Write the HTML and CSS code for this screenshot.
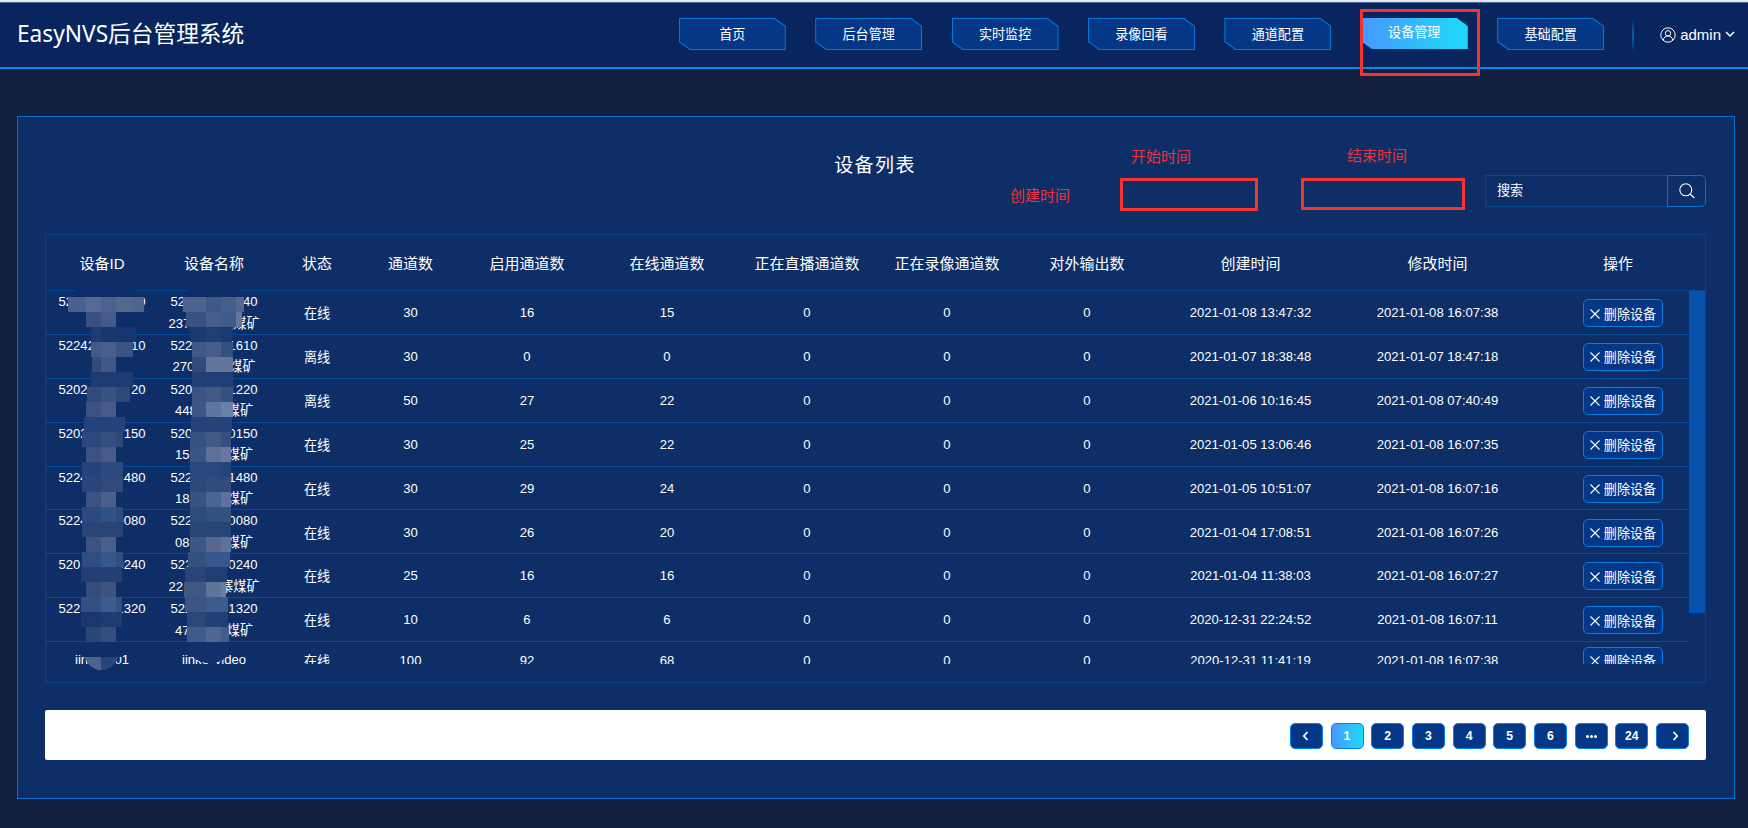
FILE: index.html
```html
<!DOCTYPE html>
<html lang="zh-CN">
<head>
  <meta charset="UTF-8">
  <title>EasyNVS后台管理系统</title>
  <link rel="stylesheet" href="styles.css">
</head>
<body>
  <header class="header">
    <h1 class="logo">EasyNVS后台管理系统</h1>
    <nav class="nav">
      <a class="nav-item">首页</a>
      <a class="nav-item">后台管理</a>
      <a class="nav-item">实时监控</a>
      <a class="nav-item">录像回看</a>
      <a class="nav-item">通道配置</a>
      <a class="nav-item active">设备管理</a>
      <a class="nav-item">基础配置</a>
    </nav>
    <span class="divider"></span>
    <div class="user">
      <svg class="user-icon" viewBox="0 0 16 16" fill="none" stroke="#fff">
        <circle cx="8" cy="8" r="7.2"/>
        <circle cx="8" cy="6.3" r="2.7"/>
        <path d="M3.3 13.2c.3-2.800 2.200-4.200 4.700-4.200s4.400 1.400 4.700 4.200"/>
      </svg>
      <span>admin</span>
      <svg class="user-arrow" viewBox="0 0 10 8" fill="none" stroke="#fff" stroke-width="1.5"><path d="M1 2l4 4 4-4"/></svg>
    </div>
  </header>

  <main class="card">
    <div class="toolbar">
      <h2>设备列表</h2>
      <div class="search">
        <span class="search-input">搜索</span>
        <button class="search-btn">
          <svg viewBox="0 0 16 16" fill="none" stroke="#fff" stroke-width="1.1"><circle cx="6.8" cy="6.8" r="6"/><path d="M11 11l4.4 4"/></svg>
        </button>
      </div>
    </div>

    <div class="table">
      <div class="row head">
        <span>设备ID</span><span>设备名称</span><span>状态</span><span>通道数</span><span>启用通道数</span><span>在线通道数</span><span>正在直播通道数</span><span>正在录像通道数</span><span>对外输出数</span><span>创建时间</span><span>修改时间</span><span>操作</span>
      </div>
      <div class="scroll">
        <div class="rows" id="rows"></div>
        <div class="scrollbar"></div>
      </div>
    </div>

    <div class="pagination">
      <button><svg viewBox="0 0 10 10"><path d="M6.5 1L2.8 5l3.7 4"/></svg></button>
      <button class="current">1</button>
      <button>2</button>
      <button>3</button>
      <button>4</button>
      <button>5</button>
      <button>6</button>
      <button class="more"><i></i><i></i><i></i></button>
      <button>24</button>
      <button><svg viewBox="0 0 10 10"><path d="M5.5 1l3.7 4-3.7 4"/></svg></button>
    </div>
  </main>

  <svg class="mosaic" id="mosaic" width="240" height="400" viewBox="40 280 240 400" shape-rendering="crispEdges"></svg>

  <!-- anotaciones -->
  <div class="mark mark-nav"></div>
  <div class="mark mark-start"></div>
  <div class="mark mark-end"></div>
  <span class="note note-created">创建时间</span>
  <span class="note note-start">开始时间</span>
  <span class="note note-end">结束时间</span>

  <script>
    // id, nombre (linea 1), nombre (linea 2), ancho linea 2, estado, canales...
    const equipos = [
      [['522', '0'], ['522', '240'], ['237', '山煤矿'], 91, '在线', 30, 16, 15, '2021-01-08 13:47:32', '2021-01-08 16:07:38'],
      [['52242', '10'], ['522', '1610'], ['270', '煤矿'], 83, '离线', 30, 0, 0, '2021-01-07 18:38:48', '2021-01-07 18:47:18'],
      [['5202', '20'], ['520', '1220'], ['448', '煤矿'], 78, '离线', 50, 27, 22, '2021-01-06 10:16:45', '2021-01-08 07:40:49'],
      [['5202', '150'], ['520', '0150'], ['15', '煤矿'], 78, '在线', 30, 25, 22, '2021-01-05 13:06:46', '2021-01-08 16:07:35'],
      [['5224', '480'], ['522', '1480'], ['18', '煤矿'], 78, '在线', 30, 29, 24, '2021-01-05 10:51:07', '2021-01-08 16:07:16'],
      [['5224', '0080'], ['522', '0080'], ['08', '煤矿'], 78, '在线', 30, 26, 20, '2021-01-04 17:08:51', '2021-01-08 16:07:26'],
      [['520', '0240'], ['522', '0240'], ['22', '寨煤矿'], 91, '在线', 25, 16, 16, '2021-01-04 11:38:03', '2021-01-08 16:07:27'],
      [['522', '1320'], ['522', '31320'], ['47', '煤矿'], 78, '在线', 10, 6, 6, '2020-12-31 22:24:52', '2021-01-08 16:07:11'],
      [['jin', '01'], ['jinke', 'video'], null, 0, '在线', 100, 92, 68, '2020-12-31 11:41:19', '2021-01-08 16:07:38']
    ];

    function partes(p, ancho) {
      return `<span class="split" style="width:${ancho}px"><b>${p[0]}</b><b>${p[1]}</b></span>`;
    }

    document.getElementById('rows').innerHTML = equipos.map(e => {
      const corto = !e[2];
      return `<div class="row${corto ? ' short' : ''}">
        <div class="lines">${partes(e[0], corto ? 54 : 87)}</div>
        <div class="lines">${partes(e[1], corto ? 64 : 87)}${corto ? '' : partes(e[2], e[3])}</div>
        <span>${e[4]}</span><span>${e[5]}</span><span>${e[6]}</span><span>${e[7]}</span>
        <span>0</span><span>0</span><span>0</span>
        <span>${e[8]}</span><span>${e[9]}</span>
        <span><button class="delete"><svg viewBox="0 0 10 10"><path d="M.5.5l9 9M9.5.5l-9 9"/></svg>删除设备</button></span>
      </div>`;
    }).join('');

    // bloques: y, luego pares x / color, y al final el x de cierre
    const bloques = [
      [297, 68, '#4b608e', 86, '#566995', 101, '#4c618d', 116, '#53678f', 131, '#4f648f', 144],
      [312, 86, '#3a5082', 101, '#445b88', 116],
      [327, 91, '#1d3c76', 101, '#163670', 136],
      [342, 91, '#435986', 101, '#4a5e8b', 116, '#3a5382', 133],
      [357, 92, '#334a7b', 101, '#405787', 116],
      [372, 91, '#1d3c74', 133],
      [387, 87, '#2f4a7b', 101, '#395381', 116, '#2d497a', 130],
      [402, 86, '#3b5282', 101, '#475a88', 116],
      [417, 84, '#24437a', 125],
      [432, 82, '#2d497b', 101, '#344e7e', 116, '#2c497a', 123],
      [447, 86, '#3b5282', 101, '#475a88', 116],
      [462, 82, '#26447a', 101, '#2b4a80', 123],
      [477, 82, '#2a4579', 101, '#32497c', 123],
      [492, 86, '#3b5282', 101, '#4c5f8b', 116],
      [507, 82, '#2c4a7f', 101, '#305387', 116, '#2b4a7d', 123],
      [522, 82, '#2b4476', 123],
      [537, 86, '#3b5282', 101, '#4c5f8b', 116],
      [552, 82, '#2f4e80', 101, '#34588a', 116, '#2d5081', 123],
      [567, 81, '#223f73', 101, '#243f74', 122],
      [582, 86, '#354b7c', 101, '#40537f', 116],
      [597, 81, '#325082', 101, '#3a5c8e', 116, '#325083', 122],
      [612, 81, '#1a386e', 101, '#1f3c72', 122],
      [627, 86, '#2a4577', 101, '#354d7e', 116],
      [642, 81, '#0f2e68', 122],
      [297, 183, '#4d628c', 206, '#3f5885', 221, '#465e8a', 236, '#53678f', 244],
      [312, 186, '#3b5281', 206, '#465e8a', 221, '#405a8c', 236, '#66789f', 242],
      [327, 190, '#193972', 206, '#1c3f78', 221, '#1b3a73', 232],
      [342, 192, '#3f5884', 206, '#465d89', 221, '#34507f', 233],
      [357, 192, '#34497a', 206, '#61769d', 233],
      [372, 192, '#203f76', 233],
      [387, 192, '#3a5381', 206, '#435984', 221, '#36507f', 233],
      [402, 192, '#3c5582', 206, '#5d769f', 221, '#6c7fa6', 233],
      [417, 191, '#25437a', 232],
      [432, 190, '#38527f', 206, '#415a84', 221, '#344f80', 231],
      [447, 190, '#3a5483', 206, '#5c7199', 221, '#6a789f', 231],
      [462, 190, '#284980', 221, '#25447a', 231],
      [477, 190, '#2c4879', 206, '#304c7c', 231],
      [492, 190, '#38537f', 206, '#4a6592', 221, '#5f719f', 231],
      [507, 190, '#2c4c7e', 206, '#325283', 231],
      [522, 190, '#284575', 231],
      [537, 190, '#3d5684', 206, '#56688f', 221, '#5f719b', 231],
      [552, 188, '#33517f', 206, '#36588a', 230],
      [567, 185, '#28447a', 206, '#213e72', 227],
      [582, 184, '#3f5883', 206, '#5f7499', 221, '#6b7fa6', 226],
      [597, 185, '#3b5684', 206, '#3b5c8c', 228],
      [612, 187, '#2a477b', 206, '#223f73', 228],
      [627, 187, '#3f5b89', 206, '#4e6690', 221, '#435d89', 229]
    ];
    let svg = '<path fill="#0d2d68" d="M70 297q2-12 34-12t36 12z M182 297q2-10 32-10t31 10z"/>';
    for (const b of bloques) {
      for (let i = 1; i < b.length - 2; i += 2) {
        svg += `<rect x="${b[i]}" y="${b[0]}" width="${b[i + 2] - b[i]}" height="15" fill="${b[i + 1]}"/>`;
      }
    }
    svg += '<path fill="#4d628c" d="M84 657h17v13.500q-11-1-17-13.500z"/>';
    svg += '<path fill="#27457a" d="M101 657h18q-6 13-18 13.500z"/>';
    svg += '<path fill="#12306a" d="M188 642h41v7q-3 14-20 14.500-17-2-21-15z"/>';
    document.getElementById('mosaic').innerHTML = svg;
  </script>
</body>
</html>
```
FILE: styles.css
```css
* {
  box-sizing: border-box;
}

body {
  position: relative;
  width: 1748px;
  height: 828px;
  margin: 0;
  overflow: hidden;
  background-color: #111f41;
  color: #fff;
  font-family: "Liberation Sans", "Noto Sans CJK SC", sans-serif;
  font-size: 13.1px;
}

button {
  font-family: inherit;
  color: #fff;
  padding: 0;
}

.header {
  display: flex;
  height: 69px;
  padding: 16px 13px 0 17px;
  border-top: 2px solid #e6ebf2;
  border-bottom: 2px solid #0583ee;
  background-color: #08265d;
  box-shadow: inset 0 1px 0 #45618c;
}

.logo {
  width: 663px;
  margin: 0;
  font-family: "Noto Sans", "Noto Sans CJK SC", sans-serif;
  font-size: 22.7px;
  font-weight: 400;
  line-height: 32px;
  white-space: nowrap;
}

.nav {
  display: flex;
  gap: 29.4px;
}

.nav-item {
  position: relative;
  z-index: 0;
  width: 107px;
  height: 32px;
  line-height: 33px;
  text-align: center;
  background-color: #0877d8;
  clip-path: polygon(0 0, calc(100% - 11px) 0, 100% 8px, 100% 100%, 11px 100%, 0 calc(100% - 8px));
}

.nav-item::before {
  content: "";
  position: absolute;
  z-index: -1;
  inset: 1px;
  background-color: #053787;
  clip-path: polygon(0 0, calc(100% - 10.5px) 0, 100% 7.5px, 100% 100%, 10.5px 100%, 0 calc(100% - 7.5px));
}

.nav-item.active {
  height: 31px;
  line-height: 30px;
  background: linear-gradient(90deg, #4599ff, #1edaf7);
}

.nav-item.active::before {
  display: none;
}

.divider {
  width: 2px;
  height: 34px;
  margin-left: 28px;
  background: linear-gradient(#08265d, #0a60b8, #08265d);
}

.user {
  display: flex;
  align-items: center;
  height: 32px;
  margin-left: 26px;
  font-size: 15px;
}

.user-icon {
  width: 16px;
  height: 16px;
  margin: 2px 4px 0 0;
}

.user-arrow {
  width: 10px;
  height: 8px;
  margin-left: 4px;
}

.card {
  width: 1718px;
  height: 683px;
  margin: 47px 0 0 17px;
  padding: 0 28px 0 27px;
  border: 1px solid #0871cd;
  background-color: #0e2e67;
}

.toolbar {
  display: grid;
  grid-template-columns: 1fr 221px;
  height: 117px;
}

.toolbar h2 {
  margin: 35px 0 0;
  padding-left: 220px;
  font-size: 19px;
  font-weight: 400;
  line-height: 28px;
  letter-spacing: 1.4px;
  text-align: center;
}

.search {
  display: flex;
  height: 32px;
  margin-top: 58px;
}

.search-input {
  flex: 1;
  padding-left: 11px;
  line-height: 30px;
  border: 1px solid #074891;
  border-right: 0;
}

.search-btn {
  display: flex;
  align-items: center;
  justify-content: center;
  width: 39px;
  border: 1px solid #0871cd;
  border-radius: 0 5px 5px 0;
  background: none;
}

.search-btn svg {
  width: 16px;
  height: 16px;
}

.table {
  height: 449px;
  border: 1px solid #07448c;
}

.row {
  display: grid;
  grid-template-columns: 112px 112px 94px 93px 140px 140px 140px 140px 140px 187px 187px 1fr;
  height: 43.9px;
  padding-bottom: 1px;
  align-items: center;
  text-align: center;
  border-bottom: 1px solid #064a9a;
}

.head {
  height: 56px;
  font-size: 15px;
  border-color: #07448c;
}

.scroll {
  display: flex;
  height: 373px;
  overflow: hidden;
}

.rows {
  flex: 1;
}

.short {
  height: 38px;
}

.lines {
  align-self: start;
  display: flex;
  flex-direction: column;
  align-items: center;
}

.short .lines {
  align-self: center;
}

.split {
  display: flex;
  justify-content: space-between;
  line-height: 21.6px;
}

.split b {
  font-weight: 400;
}

.scrollbar {
  width: 16px;
  height: 322px;
  background-color: #0552ad;
}

.delete {
  display: flex;
  align-items: center;
  justify-content: center;
  width: 80px;
  height: 28px;
  margin: 1px 0 0 52px;
  font-size: 13.1px;
  border: 1px solid #087de2;
  border-radius: 5px;
  background-color: #053787;
}

.delete svg {
  width: 10px;
  height: 10px;
  margin: 1px 4px 0 0;
  stroke: #fff;
  stroke-width: 1.1;
}

.pagination {
  display: flex;
  align-items: center;
  justify-content: flex-end;
  gap: 7.7px;
  height: 50px;
  margin-top: 27px;
  padding: 2px 17px 0 0;
  border-radius: 2px;
  background-color: #fff;
}

.pagination button {
  display: flex;
  align-items: center;
  justify-content: center;
  width: 33px;
  height: 26px;
  font-size: 12.2px;
  font-weight: bold;
  border: 1px solid #0a80ec;
  border-radius: 5px;
  background-color: #053787;
}

.pagination .current {
  background: linear-gradient(90deg, #4599ff, #1edaf7);
}

.pagination svg {
  width: 10px;
  height: 10px;
  fill: none;
  stroke: #fff;
  stroke-width: 1.7;
}

.pagination .more {
  gap: 1px;
}

.more i {
  width: 3px;
  height: 3px;
  border-radius: 50%;
  background-color: #fff;
}

.mosaic {
  position: absolute;
  left: 40px;
  top: 280px;
}

.mark {
  position: absolute;
  border: 3px solid #f8322f;
}

.mark-nav {
  left: 1360px;
  top: 9px;
  width: 120px;
  height: 67px;
}

.mark-start {
  left: 1120px;
  top: 178px;
  width: 138px;
  height: 33px;
}

.mark-end {
  left: 1301px;
  top: 178px;
  width: 164px;
  height: 32px;
}

.note {
  position: absolute;
  font-size: 15px;
  line-height: 20px;
  color: #e8343c;
}

.note-created {
  left: 1010px;
  top: 186px;
}

.note-start {
  left: 1131px;
  top: 147px;
}

.note-end {
  left: 1347px;
  top: 146px;
}
```
